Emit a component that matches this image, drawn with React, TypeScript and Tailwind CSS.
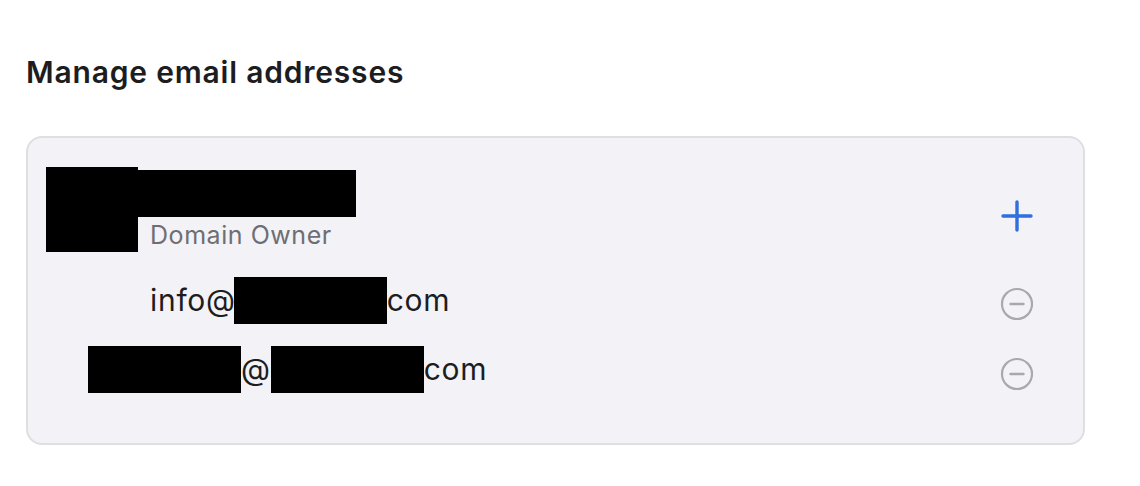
import React from "react";

const font = { fontFamily: "Inter, 'Noto Sans', sans-serif" };

function PlusIcon() {
  return (
    <svg width="34" height="34" viewBox="0 0 34 34" fill="none">
      <path d="M17 3v28M3 17h28" stroke="#2f6fe0" strokeWidth="3.4" strokeLinecap="round" />
    </svg>
  );
}

function MinusCircle() {
  return (
    <svg width="34" height="34" viewBox="0 0 34 34" fill="none">
      <circle cx="17" cy="17" r="15" stroke="#a9a9ad" strokeWidth="2.2" />
      <path d="M10.5 17h13" stroke="#a9a9ad" strokeWidth="2.4" strokeLinecap="round" />
    </svg>
  );
}

export default function App() {
  return (
    <div className="min-h-[486px] w-[1140px] bg-white text-[#1d1d1f]" style={font}>
      <div className="pl-[26px] pt-[53px]">
        <h1 className="text-[30px] leading-[38px] font-semibold tracking-[0.8px]">Manage email addresses</h1>
      </div>
      <div className="ml-[26px] mt-[45px] w-[1059px] h-[309px] rounded-[16px] border-2 border-[#dedee3] bg-[#f2f2f7] pt-[29px] pl-[18px] pr-[49px]">
        <div className="flex items-start h-[85px]">
          <div className="w-[92px] h-[85px] bg-black" />
          <div className="flex flex-col">
            <div className="w-[218px] h-[47px] mt-[3px] bg-black" />
            <div className="pl-[12px] mt-[3px] text-[25px] leading-[30px] tracking-[0.55px] text-[#6e6e73]">Domain Owner</div>
          </div>
          <div className="ml-auto mt-[32px]">
            <PlusIcon />
          </div>
        </div>
        <div className="flex items-center h-[47px] mt-[25px]">
          <div className="flex items-center pl-[104px] text-[30px] leading-[47px] tracking-[0.7px]">
            <span>info@</span>
            <div className="w-[153px] h-[47px] bg-black -ml-[2px]" />
            <span>com</span>
          </div>
          <div className="ml-auto mt-[7px]">
            <MinusCircle />
          </div>
        </div>
        <div className="flex items-center h-[47px] mt-[22px]">
          <div className="flex items-center pl-[42px] text-[30px] leading-[47px] tracking-[0.7px]">
            <div className="w-[153px] h-[47px] bg-black" />
            <span>@</span>
            <div className="w-[153px] h-[47px] bg-black" />
            <span>com</span>
          </div>
          <div className="ml-auto mt-[8px]">
            <MinusCircle />
          </div>
        </div>
      </div>
    </div>
  );
}
